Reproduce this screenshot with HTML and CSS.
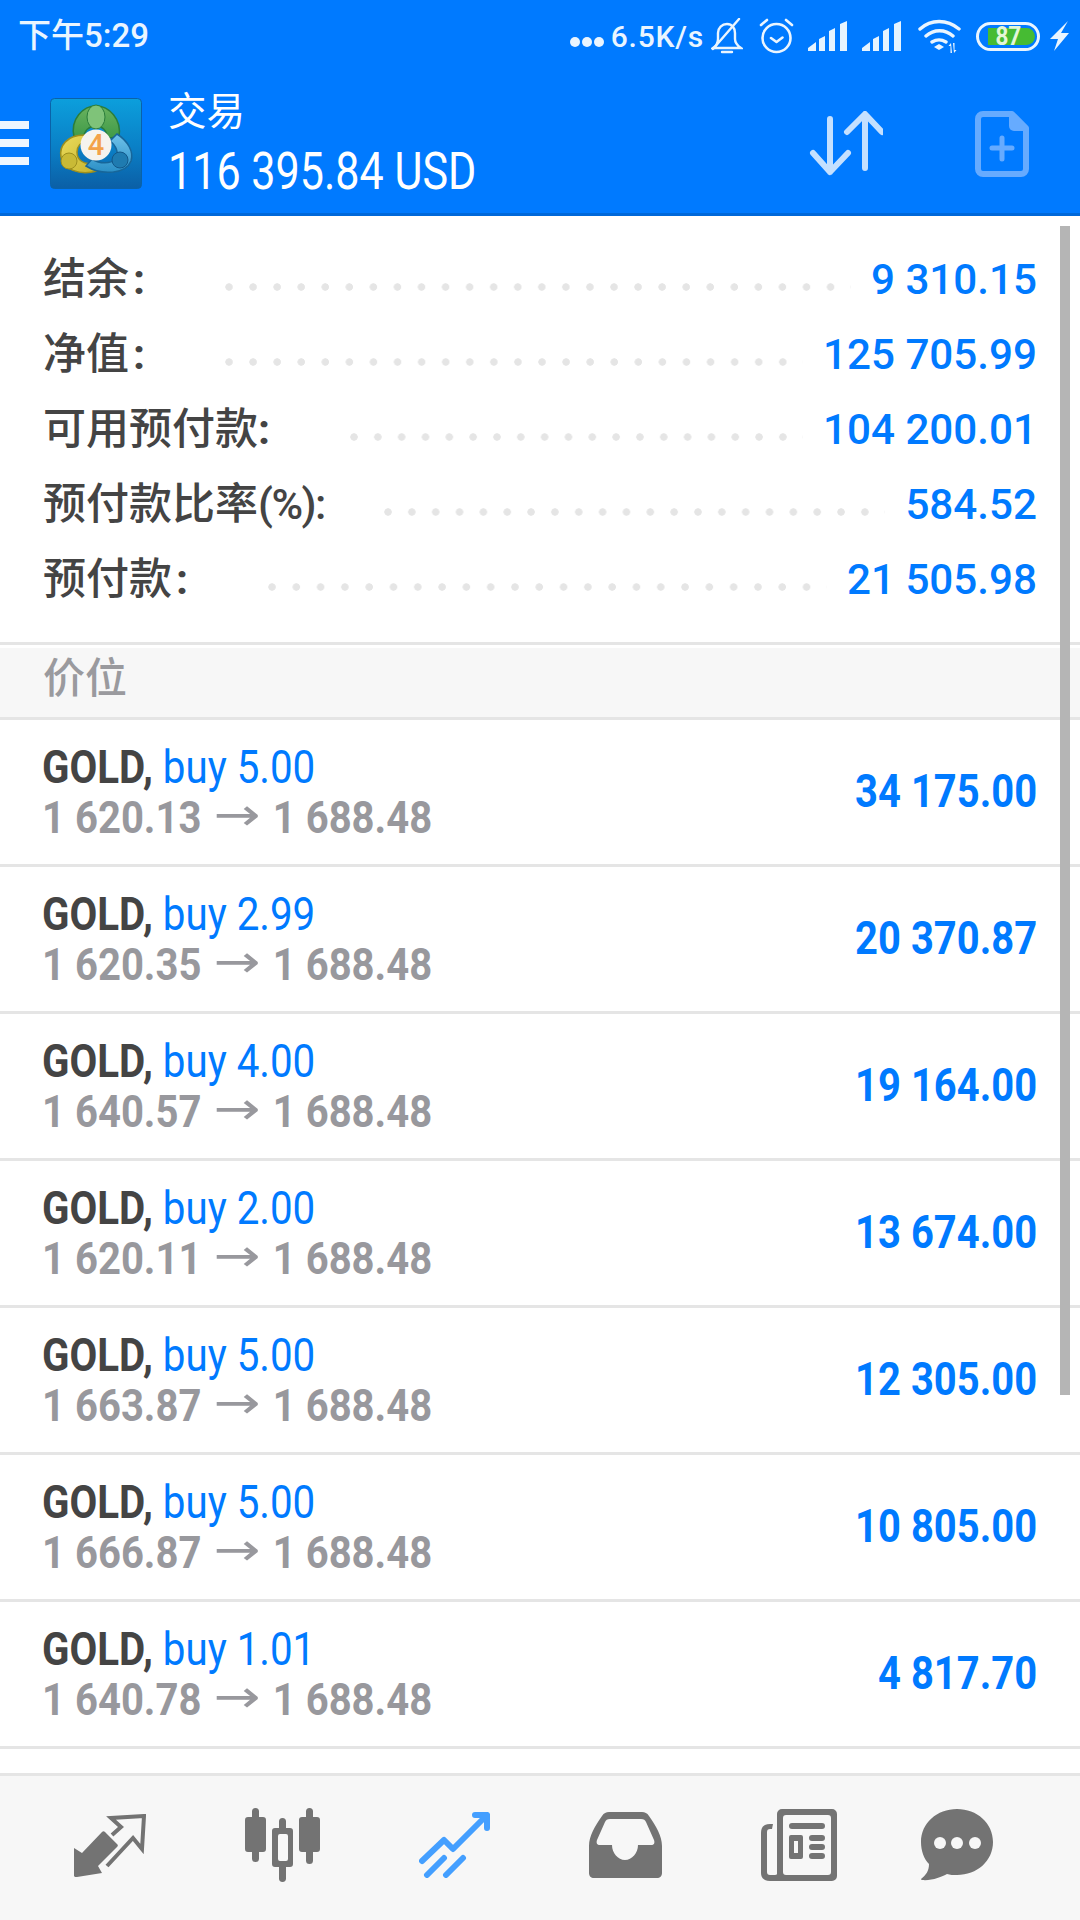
FILE: index.html
```html
<!DOCTYPE html>
<html lang="zh-CN">
<head>
<meta charset="utf-8">
<title>交易</title>
<link rel="stylesheet" href="styles.css">
</head>
<body>
<div class="app">
  <header class="header">
    <div class="status">
      <span class="time">下午5:29</span>
      <div class="status-right">
        <span class="dots3"><i></i><i></i><i></i></span>
        <span class="speed">6.5K/s</span>
        <svg class="si si-bell" width="32" height="36" viewBox="0 0 32 36" fill="none" stroke="#eaf5ff" stroke-width="2.4"><path d="M2 30c3-2 5-5 5-9v-6c0-5 4-9 9-9s8 4 8 9v6c0 4 3 7 6 9z"/><path d="M28 1 2 31M11 34h10" stroke-linecap="round"/></svg>
        <svg class="si si-alarm" width="35" height="36" viewBox="0 0 35 36" fill="none" stroke="#eaf5ff" stroke-width="2.6" stroke-linecap="round" stroke-linejoin="round"><circle cx="17.5" cy="20" r="14"/><path d="M12 20l5.500 4 6-4.500M2 7l6-5M33 7l-6-5"/></svg>
        <svg class="si si-sig" width="40" height="30" viewBox="0 0 40 30" fill="#e6f4ff"><path d="M0 30v-3l8-6v9zM11 30V18l6-3v15zM21 30V10l6-3v23zM32 30V3l7-3v30z"/></svg>
        <svg class="si si-sig2" width="40" height="30" viewBox="0 0 40 30" fill="#e6f4ff"><path d="M0 30v-3l8-6v9zM11 30V18l6-3v15zM21 30V10l6-3v23zM32 30V3l7-3v30z"/></svg>
        <svg class="si si-wifi" width="43" height="36" viewBox="0 0 43 36" fill="none" stroke="#eaf5ff" stroke-width="3.400" stroke-linecap="round"><path d="M2 11c11-10 27-10 39 0M8 18c8-7 19-7 27 0M14 24c5-3 9-3 14 0"/><path d="M21 32l-5-3 5-3 5 3z" fill="#eaf5ff" stroke="none"/><path d="M33 25l-2.500 3h2v7h1.500zM36 35l2.500-3h-2v-7H35z" fill="#eaf5ff" stroke="none"/></svg>
        <div class="battery"><div class="level"></div><span>87</span></div>
        <svg class="si si-bolt" width="19" height="30" viewBox="0 0 19 30" fill="#eaf5ff"><path d="M18 0 0 18h8L4 30l15-18h-8z"/></svg>
      </div>
    </div>
    <div class="toolbar">
      <div class="burger"><i></i><i></i><i></i></div>
      <svg class="logo" width="94" height="94" viewBox="0 0 94 94">
        <defs>
          <linearGradient id="bg" x1="0" y1="0" x2="0" y2="1"><stop offset="0" stop-color="#0c9fdc"/><stop offset=".55" stop-color="#0a7fc6"/><stop offset="1" stop-color="#0b5fa6"/></linearGradient>
          <linearGradient id="gr" x1="0" y1="0" x2="0" y2="1"><stop offset="0" stop-color="#69b25e"/><stop offset="1" stop-color="#3f9a48"/></linearGradient>
          <linearGradient id="ye" x1="0" y1="0" x2="1" y2="1"><stop offset="0" stop-color="#ecdc5c"/><stop offset="1" stop-color="#c4b32d"/></linearGradient>
          <linearGradient id="bl" x1="0" y1="0" x2="0" y2="1"><stop offset="0" stop-color="#6fc2ea"/><stop offset="1" stop-color="#2b8fc6"/></linearGradient>
        </defs>
        <rect x="1.500" y="1.500" width="91" height="90" rx="4" fill="url(#bg)" stroke="#0a62a8"/>
        <path d="M25 40C21 22 34 9 47 9c13 0 26 13 23 31l-11 1c-2-9-6-12-12-12s-11 3-13 12z" fill="url(#gr)" stroke="#2a7d3b" stroke-width="1.500"/>
        <ellipse cx="47" cy="20" rx="9" ry="12" fill="#7fc379" stroke="#2a7d3b"/>
        <path d="M35 38C18 38 10 49 12 60c2 12 18 19 36 14l-5-8c-8 2-15-3-15-11 0-6 4-10 9-11z" fill="url(#ye)" stroke="#9d8f1d" stroke-width="1.500"/>
        <circle cx="20" cy="64" r="8" fill="#c9ba36" stroke="#9d8f1d"/>
        <path d="M68 37c11 7 17 18 14 27-5 13-29 15-45 5l6-7c8 5 18 5 24 0 3-6 0-14-6-18z" fill="url(#bl)" stroke="#17669a" stroke-width="1.500"/>
        <circle cx="71" cy="63" r="8" fill="#1f7bb0" stroke="#12588a"/>
        <circle cx="47" cy="48" r="15.500" fill="#f6f3ee"/>
        <text class="logo-num" x="47" y="58" text-anchor="middle">4</text>
      </svg>
      <div class="account">
        <div class="acc-title">交易</div>
        <div class="acc-value"><span>116 395.84 USD</span></div>
      </div>
      <svg class="tb-sort" width="74" height="66" viewBox="0 0 74 66" fill="none" stroke="#c4e0ff" stroke-width="6" stroke-linecap="round" stroke-linejoin="round"><path d="M21 8v53M4 42l17 19 18-19M56 4v53M38 21 56 3l17 18"/></svg>
      <svg class="tb-new" width="54" height="66" viewBox="0 0 54 66" fill="none"><path d="M8 3h29l14 14v41a5 5 0 0 1-5 5H8a5 5 0 0 1-5-5V8a5 5 0 0 1 5-5z" stroke="#66abff" stroke-width="6" stroke-linejoin="round"/><path d="M34 3v12a5 5 0 0 0 5 5h12z" fill="#66abff"/><path d="M27 27v21M17 37h20" stroke="#66abff" stroke-width="5" stroke-linecap="round"/></svg>
    </div>
  </header>

  <main class="content">
    <section class="summary">
      <div class="sum-row"><span class="sum-label">结余<span class="colon">:</span></span><span class="leader"></span><span class="sum-value">9 310.15</span></div>
      <div class="sum-row"><span class="sum-label">净值<span class="colon">:</span></span><span class="leader"></span><span class="sum-value">125 705.99</span></div>
      <div class="sum-row"><span class="sum-label">可用预付款<span class="colon colon-near">:</span></span><span class="leader"></span><span class="sum-value">104 200.01</span></div>
      <div class="sum-row"><span class="sum-label">预付款比率<span class="tight">(%):</span></span><span class="leader leader-near"></span><span class="sum-value">584.52</span></div>
      <div class="sum-row"><span class="sum-label">预付款<span class="colon">:</span></span><span class="leader"></span><span class="sum-value">21 505.98</span></div>
    </section>
    <div class="sec-title">价位</div>
    <section class="trades">
      <div class="trade"><div class="t-left"><div class="t-top"><b>GOLD,</b> <em>buy 5.00</em></div><div class="t-bot">1 620.13 <span class="arr">→</span> 1 688.48</div></div><div class="t-val">34 175.00</div></div>
      <div class="trade"><div class="t-left"><div class="t-top"><b>GOLD,</b> <em>buy 2.99</em></div><div class="t-bot">1 620.35 <span class="arr">→</span> 1 688.48</div></div><div class="t-val">20 370.87</div></div>
      <div class="trade"><div class="t-left"><div class="t-top"><b>GOLD,</b> <em>buy 4.00</em></div><div class="t-bot">1 640.57 <span class="arr">→</span> 1 688.48</div></div><div class="t-val">19 164.00</div></div>
      <div class="trade"><div class="t-left"><div class="t-top"><b>GOLD,</b> <em>buy 2.00</em></div><div class="t-bot">1 620.11 <span class="arr">→</span> 1 688.48</div></div><div class="t-val">13 674.00</div></div>
      <div class="trade"><div class="t-left"><div class="t-top"><b>GOLD,</b> <em>buy 5.00</em></div><div class="t-bot">1 663.87 <span class="arr">→</span> 1 688.48</div></div><div class="t-val">12 305.00</div></div>
      <div class="trade"><div class="t-left"><div class="t-top"><b>GOLD,</b> <em>buy 5.00</em></div><div class="t-bot">1 666.87 <span class="arr">→</span> 1 688.48</div></div><div class="t-val">10 805.00</div></div>
      <div class="trade"><div class="t-left"><div class="t-top"><b>GOLD,</b> <em>buy 1.01</em></div><div class="t-bot">1 640.78 <span class="arr">→</span> 1 688.48</div></div><div class="t-val">4 817.70</div></div>
    </section>
    <div class="scrollbar"></div>
  </main>

  <nav class="tabbar">
    <svg class="tab" width="72" height="63" viewBox="0 0 72 63"><path fill="#737373" d="M0 62V34l8 5 20-21a2 2 0 0 1 3 0l12 12a2 2 0 0 1 0 3L24 52l4 7-25 4a3 3 0 0 1-3-1z"/><path fill="none" stroke="#737373" stroke-width="4" d="M38 21l9-8-10-9 33-2-2 33-9-11-26 28"/></svg>
    <svg class="tab" width="75" height="74" viewBox="0 0 75 74" fill="#737373"><path d="M7 3.500a3.500 3.500 0 0 1 7 0V9h4a3 3 0 0 1 3 3v29a3 3 0 0 1-3 3h-4v6.500a3.500 3.500 0 0 1-7 0V44H3a3 3 0 0 1-3-3V12a3 3 0 0 1 3-3h4z"/><path d="M61 3.500a3.500 3.500 0 0 1 7 0V9h4a3 3 0 0 1 3 3v29a3 3 0 0 1-3 3h-4v8.500a3.500 3.500 0 0 1-7 0V44h-4a3 3 0 0 1-3-3V12a3 3 0 0 1 3-3h4z"/><path fill-rule="evenodd" d="M34 13.500a3.500 3.500 0 0 1 7 0V20h4a3 3 0 0 1 3 3v33a3 3 0 0 1-3 3h-4v11.500a3.500 3.500 0 0 1-7 0V59h-4a3 3 0 0 1-3-3V23a3 3 0 0 1 3-3h4zM33 28v23a2 2 0 0 0 2 2h6a2 2 0 0 0 2-2V28a2 2 0 0 0-2-2h-6a2 2 0 0 0-2 2z"/></svg>
    <svg class="tab" width="71" height="66" viewBox="0 0 71 66" fill="none" stroke="#449fff" stroke-width="6" stroke-linecap="round" stroke-linejoin="round"><path d="M3 49 25 28l9 9 34-34M56 3h12v13M25 46 8 63M44 46 27 63"/></svg>
    <svg class="tab" width="73" height="66" viewBox="0 0 73 66" fill="#737373"><path fill-rule="evenodd" d="M20 0h33c3 0 5 1 7 4 7 10 13 20 13 30v27c0 3-2 5-5 5H5c-3 0-5-2-5-5V34C0 24 6 14 13 4c2-3 4-4 7-4zm1 7c-3 0-4 1-5 3L8 28c-1 3 0 5 3 5h12c0 8 6 15 13 15s13-7 13-15h13c3 0 4-2 3-5l-8-18c-1-2-2-3-5-3z"/></svg>
    <svg class="tab" width="76" height="72" viewBox="0 0 76 72" fill="#737373"><path fill-rule="evenodd" d="M21 0h50a5 5 0 0 1 5 5v62a5 5 0 0 1-5 5H9c-6 0-9-3-9-8V24c0-6 3-9 9-9h3l-1 5H9c-2 0-3 1-3 3v40c0 2 1 3 3 3h5c2 0 2-1 2-2V5a5 5 0 0 1 5-5zm4 6c-2 0-3 1-3 3v54c0 2 1 3 3 3h42c2 0 3-1 3-3V9c0-2-1-3-3-3z"/><path d="M28 17a3 3 0 0 1 3-3h30a3 3 0 0 1 0 6H31a3 3 0 0 1-3-3zM48 29a3 3 0 0 1 3-3h10a3 3 0 0 1 0 6H51a3 3 0 0 1-3-3zM48 38a3 3 0 0 1 3-3h10a3 3 0 0 1 0 6H51a3 3 0 0 1-3-3zM48 47a3 3 0 0 1 3-3h10a3 3 0 0 1 0 6H51a3 3 0 0 1-3-3z"/><path fill-rule="evenodd" d="M30 26h10a2 2 0 0 1 2 2v20a2 2 0 0 1-2 2H30a2 2 0 0 1-2-2V28a2 2 0 0 1 2-2zm3 6v12h4V32z"/></svg>
    <svg class="tab tab-last" width="72" height="72" viewBox="0 0 72 72" fill="#737373"><path d="M36 0c20 0 36 14 36 33S56 66 36 66c-4 0-7 0-10-1-5 3-16 7-25 6-1 0-1-1-1-1 5-4 8-8 8-15C3 50 0 42 0 33 0 14 16 0 36 0z"/><circle cx="19" cy="34" r="6" fill="#f7f7f7"/><circle cx="36" cy="34" r="6" fill="#f7f7f7"/><circle cx="54" cy="34" r="6" fill="#f7f7f7"/></svg>
  </nav>
</div>
</body>
</html>
```
FILE: styles.css
```css
* { box-sizing: border-box; }
html, body { margin: 0; padding: 0; }
body { width: 1080px; height: 1920px; overflow: hidden; background: #fff; font-family: Roboto, "Noto Sans CJK SC", sans-serif; }
.app { width: 1080px; height: 1920px; display: flex; flex-direction: column; }

.header { height: 216px; flex: none; background: #007aff; border-bottom: 3px solid #0068d9; color: #fff; }
.status { height: 72px; display: flex; align-items: center; justify-content: space-between; padding: 0 11px 0 18px; color: #eaf5ff; }
.time { font-size: 33px; font-weight: 500; padding-bottom: 7px; }
.status-right { display: flex; align-items: center; }
.dots3 { display: flex; gap: 2px; margin-top: 11px; }
.dots3 i { width: 10px; height: 10px; border-radius: 50%; background: #eaf5ff; }
.speed { font-size: 30px; font-weight: 500; letter-spacing: .8px; margin-left: 7px; }
.si { flex: none; }
.si-bell { margin-left: 7px; }
.si-alarm { margin-left: 16px; }
.si-sig { margin-left: 14px; }
.si-sig2 { margin-left: 14px; }
.si-wifi { margin-left: 16px; }
.si-bolt { margin-left: 10px; }
.battery { position: relative; width: 64px; height: 29px; margin-left: 15px; border: 3px solid #eaf5ff; border-radius: 15px; display: flex; align-items: center; justify-content: center; }
.battery .level { position: absolute; left: 9px; top: 3px; bottom: 3px; width: 47px; background: #46bb33; border-radius: 0 10px 10px 0; }
.battery span { position: relative; font-size: 25px; font-weight: 700; color: #e4f7d9; transform: scaleX(.9); line-height: 1; }

.toolbar { height: 141px; display: flex; align-items: center; }
.burger { width: 29px; display: flex; flex-direction: column; gap: 10px; margin-right: 20px; }
.burger i { display: block; height: 8px; background: #eef6ff; }
.logo { flex: none; margin-top: 3px; }
.account { margin-left: 25px; flex: 1; display: flex; flex-direction: column; padding-top: 8px; }
.acc-title { font-size: 38.500px; line-height: 44px; }
.acc-value { font-size: 51px; line-height: 62px; margin-top: 7px; }
.acc-value span { display: inline-block; transform: scaleX(.845); transform-origin: left center; white-space: nowrap; }
.tb-sort { margin-right: 92px; margin-top: 2px; }
.tb-new { margin-right: 51px; margin-top: 2px; }

.content { position: relative; flex: 1; display: flex; flex-direction: column; min-height: 0; }
.summary { height: 426px; padding: 25px 0 0 43px; }
.sum-row { height: 75px; display: flex; align-items: center; padding-right: 43px; }
.sum-label { font-size: 43px; font-weight: 500; color: #444; white-space: nowrap; padding-bottom: 7px; }
.colon { font-weight: 700; margin-left: 4px; }
.colon-near { margin-left: 0; }
.tight { letter-spacing: -1.500px; }
.leader { flex: 1; height: 8px; margin: 16px 20px 0 80px; background: radial-gradient(circle at 4px 4px, #e5e5e5 3.400px, transparent 4px) left center / 24px 8px round no-repeat; }
.leader-near { margin-left: 59px; }
.sum-value { font-size: 42.200px; font-weight: 500; color: #007aff; white-space: nowrap; padding-top: 2px; }

.sec-title { height: 78px; flex: none; padding: 0 0 0 43px; font-size: 42px; font-weight: 500; line-height: 67px; color: #9a9a9e; background: #f7f7f7; border-top: 3px solid #e5e5e5; border-bottom: 3px solid #e5e5e5; box-shadow: inset 0 3px 0 #fff; }

.trades { flex: 1; }
.trade { height: 147px; display: flex; align-items: center; justify-content: space-between; padding: 0 43px 1px 42px; border-bottom: 3px solid #e5e5e5; }
.t-top { font-size: 47px; line-height: 51px; white-space: nowrap; transform: scaleX(.857); transform-origin: left center; width: 500px; }
.t-top b { color: #444; font-weight: 700; }
.t-top em { color: #007aff; font-style: normal; }
.t-bot { font-size: 45px; line-height: 51px; font-weight: 700; color: #98989d; white-space: nowrap; transform: scaleX(.89); transform-origin: left center; width: 500px; }
.arr { display: inline-block; margin: 0 10px; font-family: "DejaVu Sans", sans-serif; font-size: 45px; font-weight: 400; line-height: 1; vertical-align: 3px; transform: scaleX(1.4); }
.t-val { font-size: 47px; font-weight: 700; color: #007aff; white-space: nowrap; transform: scaleX(.85); transform-origin: right center; padding-bottom: 2px; }

.scrollbar { position: absolute; right: 10px; top: 10px; width: 10px; height: 1169px; background: #b5b5b5; }

.tabbar { height: 147px; flex: none; display: flex; align-items: center; gap: 99px; background: #f7f7f7; border-top: 3px solid #e5e5e5; padding: 0 0 6px 74px; }
.tab { flex: none; }
.tab-last { margin-left: -15px; }
.logo-num { font-family: Roboto, sans-serif; font-size: 29px; font-weight: 500; fill: #f3a24a; }
```
